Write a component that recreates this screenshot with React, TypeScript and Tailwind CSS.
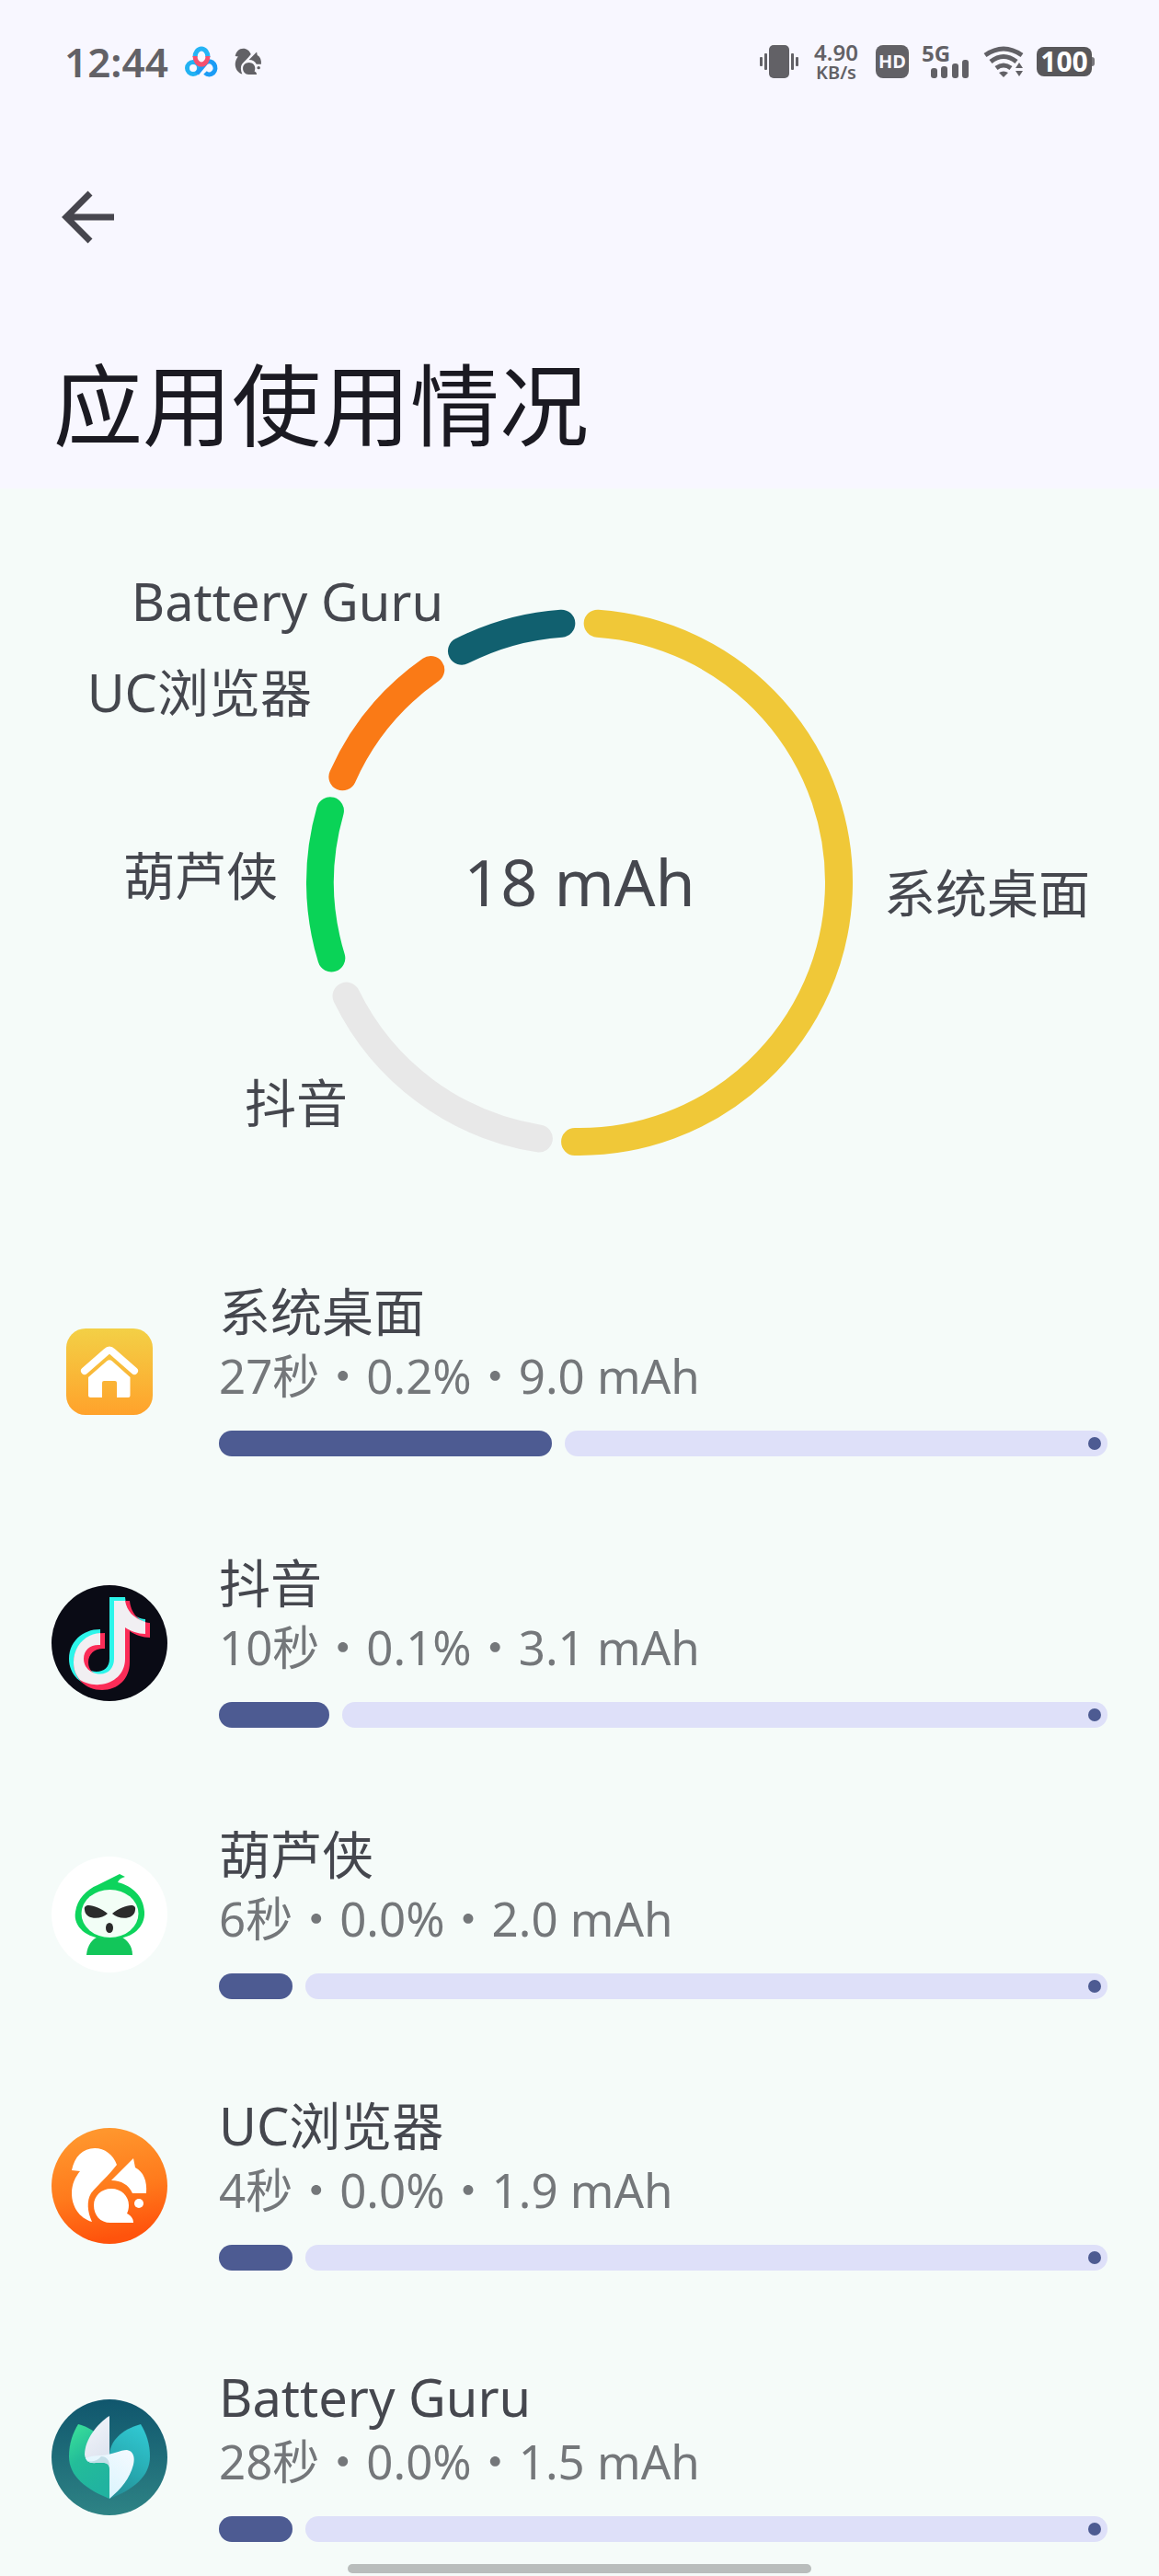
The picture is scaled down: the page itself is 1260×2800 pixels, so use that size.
import React from 'react';

interface AppUsage {
  name: string;
  detail: string;
  percent: number;
  icon: React.ReactNode;
}

interface Segment {
  name: string;
  color: string;
  from: number;
  to: number;
  x: number;
  y: number;
  anchor: 'start' | 'end';
}

const HomeIcon = () => (
  <svg viewBox="0 0 126 126" className="w-full h-full" aria-hidden="true">
    <defs>
      <linearGradient id="home-bg" x1="0" y1="0" x2="0" y2="1">
        <stop offset="0" stopColor="#f3d046" />
        <stop offset="1" stopColor="#ffa22b" />
      </linearGradient>
    </defs>
    <rect x="16" y="16" width="94" height="94" rx="21" fill="url(#home-bg)" />
    <path d="M36 62 L60 41 Q63 38 66 41 L90 62" fill="none" stroke="#fff" strokeWidth="8" strokeLinecap="round" strokeLinejoin="round" />
    <path d="M40 69 L60 51.500 Q63 49 66 51.500 L85.500 69 V89 Q85.500 91 83.500 91 H71 V75 Q71 73 69 73 H57 Q55 73 55 75 V91 H42.500 Q40 91 40 89 Z" fill="#fff" />
  </svg>
);

const NOTE = 'M63 13 H80 C81 25 89 36 102 37 V53 C94 53 86 50 80 46 V80 C80 98 67 110 50 110 C32 110 19 97 19 80 C19 62 33 48 53 48 V65 C43 64 35 70 35 80 C35 88 41 94 49 94 C57 94 63 89 63 80 Z';

const DouyinIcon = () => (
  <svg viewBox="0 0 126 126" className="w-full h-full" aria-hidden="true">
    <circle cx="63" cy="63" r="63" fill="#0a0b15" />
    <path d={NOTE} fill="#2df5ea" />
    <path d={NOTE} fill="#fb2c57" transform="translate(5 4)" />
    <path d="M68 17 H80 C82 28 89 36 102 40 V53 C94 53 86 50 80 46 V80 C80 96 68 107 52 108 C44 109 36 106 31 103 C26 97 24 91 24 84 C24 66 37 53 53 52 V65 C43 64 35 70 35 80 C35 86 38 91 43 94 C57 101 68 93 68 80 Z" fill="#f1eff2" />
  </svg>
);

const HuluxiaIcon = () => (
  <svg viewBox="0 0 126 126" className="w-full h-full" aria-hidden="true">
    <circle cx="63" cy="63" r="63" fill="#fff" />
    <path d="M38 107 C39 96 44 90 51 87 H75 C82 90 88 97 88 107 Z" fill="#12c65a" />
    <path d="M26 60 C28 46 38 36 50 31 L74 19 L80 22 C76 23 73 25 72 28 C88 32 100 43 101 60 C102 77 87 89 70 89 H57 C40 89 23 77 26 60 Z" fill="#0dd45c" />
    <ellipse cx="63.500" cy="62" rx="31" ry="26" fill="#f2fef6" />
    <path d="M36 58 C34 49 50 53 61 62 C54 69 37 69 36 58 Z M91 58 C93 49 77 53 66 62 C73 69 90 69 91 58 Z" fill="#2b2b2b" />
    <ellipse cx="63" cy="77.500" rx="4" ry="5.500" fill="#2b2b2b" />
  </svg>
);

const SquirrelShape = () => (
  <>
    <path d="M22 46 C25 31 34 22 47 22 C58 22 67 29 71 40 C62 52 51 61 43 71 C38 79 39 91 44 102 C30 98 22 85 22 71 C22 61 26 53 31 47 Z" />
    <path d="M65 57 L89 33 L91 43 C100 48 104 57 103 71 H88 C84 62 76 57 65 57 Z" />
    <path d="M65 66 C76 66 84 74 84 84 C84 88 83 91 82 93 C86 95 89 98 89 103 H64 C53 103 46 95 46 84 C46 74 54 66 65 66 Z" />
    <circle cx="95" cy="82" r="5" />
  </>
);

const UcIcon = () => (
  <svg viewBox="0 0 126 126" className="w-full h-full" aria-hidden="true">
    <defs>
      <linearGradient id="uc-bg" x1="0.600" y1="0" x2="0.800" y2="1">
        <stop offset="0" stopColor="#ff962d" />
        <stop offset="0.500" stopColor="#ff7a1c" />
        <stop offset="0.900" stopColor="#ff530c" />
      </linearGradient>
    </defs>
    <circle cx="63" cy="63" r="63" fill="url(#uc-bg)" />
    <g fill="#fff">
      <SquirrelShape />
    </g>
  </svg>
);

const BatteryGuruIcon = () => (
  <svg viewBox="0 0 126 126" className="w-full h-full" aria-hidden="true">
    <defs>
      <linearGradient id="guru-bg" x1="0" y1="0" x2="0" y2="1">
        <stop offset="0" stopColor="#10566d" />
        <stop offset="1" stopColor="#2e8385" />
      </linearGradient>
      <linearGradient id="guru-left" x1="0" y1="0" x2="0.400" y2="1">
        <stop offset="0" stopColor="#3ce39a" />
        <stop offset="0.500" stopColor="#23bd99" />
        <stop offset="1" stopColor="#21b3a0" />
      </linearGradient>
      <linearGradient id="guru-right" x1="0.600" y1="0" x2="0.300" y2="1">
        <stop offset="0" stopColor="#30c6d0" />
        <stop offset="0.600" stopColor="#27a9b0" />
        <stop offset="1" stopColor="#259099" />
      </linearGradient>
      <linearGradient id="guru-top" x1="0" y1="0" x2="0.400" y2="1">
        <stop offset="0" stopColor="#f4f6fc" />
        <stop offset="1" stopColor="#dfe5f0" />
      </linearGradient>
      <linearGradient id="guru-bottom" x1="1" y1="0" x2="0.200" y2="1">
        <stop offset="0" stopColor="#f5faff" />
        <stop offset="1" stopColor="#d5f3fd" />
      </linearGradient>
    </defs>
    <circle cx="63" cy="63" r="63" fill="url(#guru-bg)" />
    <path d="M29 27 C48 32 63 46 63 66 V108 C38 98 19 84 19 62 C19 48 23 37 29 27 Z" fill="url(#guru-left)" />
    <path d="M97 27 C76 33 63 45 63 62 V108 C89 98 107 84 107 62 C107 48 103 37 97 27 Z" fill="url(#guru-right)" />
    <path d="M63 18 C50 26 36 44 36 60 C37 67 42 70 48 69 L63 61 Z" fill="url(#guru-top)" />
    <path d="M37 64 C41 62 47 61 54 61 C66 60 75 55 82 55 C89 56 91 63 89 71 C85 86 76 97 63 108 V76 C63 72 61 69 57 69 H46 C41 69 38 67 37 64 Z" fill="url(#guru-bottom)" />
    <path d="M38 66 C43 69 50 67 54 62 C60 62 63 66 63 73 C61 69 58 69 56 69 H46 C42 69 40 68 38 66 Z" fill="#c3dfe8" />
  </svg>
);

const apps: AppUsage[] = [
  { name: '系统桌面', detail: '27秒・0.2%・9.0 mAh', percent: 37.5, icon: <HomeIcon /> },
  { name: '抖音', detail: '10秒・0.1%・3.1 mAh', percent: 12.4, icon: <DouyinIcon /> },
  { name: '葫芦侠', detail: '6秒・0.0%・2.0 mAh', percent: 8.3, icon: <HuluxiaIcon /> },
  { name: 'UC浏览器', detail: '4秒・0.0%・1.9 mAh', percent: 8.3, icon: <UcIcon /> },
  { name: 'Battery Guru', detail: '28秒・0.0%・1.5 mAh', percent: 8.3, icon: <BatteryGuruIcon /> },
];

const segments: Segment[] = [
  { name: '系统桌面', color: '#f0c838', from: 4, to: 181, x: 961, y: 461, anchor: 'start' },
  { name: '抖音', color: '#e8e8e8', from: 189, to: 244, x: 378, y: 689, anchor: 'end' },
  { name: '葫芦侠', color: '#0ad357', from: 253, to: 286, x: 302, y: 442, anchor: 'end' },
  { name: 'UC浏览器', color: '#fa7a16', from: 294, to: 325, x: 339, y: 243, anchor: 'end' },
  { name: 'Battery Guru', color: '#11606f', from: 333, to: 356, x: 482, y: 144, anchor: 'end' },
];

const CX = 630;
const CY = 428;
const RADIUS = 282;

const arcPath = (from: number, to: number) => {
  const point = (deg: number) => {
    const a = (deg * Math.PI) / 180;
    return `${CX + RADIUS * Math.sin(a)} ${CY - RADIUS * Math.cos(a)}`;
  };
  return `M ${point(from)} A ${RADIUS} ${RADIUS} 0 ${to - from > 180 ? 1 : 0} 1 ${point(to)}`;
};

const StatusBar = () => (
  <div className="h-[134px] px-[70px] flex items-center justify-between text-[#626166]">
    <div className="flex items-center">
      <span className="text-[44px] leading-none font-semibold">12:44</span>
      <svg viewBox="0 0 36 36" className="w-9 h-9 ml-[18px]" fill="none" strokeWidth="5" aria-hidden="true">
        <circle cx="9" cy="25" r="6.500" stroke="#22b2f2" />
        <path d="M22 30 A6.500 7 0 1 0 23 19 L13 31" stroke="#1c9cf5" />
        <path d="M11 13 A7 9 0 0 1 25 13" stroke="#25b4f5" />
        <path d="M11 12 A7 9 0 0 0 25 12" stroke="#f5506e" />
      </svg>
      <svg viewBox="20 20 86 86" className="w-[30px] h-[30px] ml-[18px]" fill="currentColor" aria-hidden="true">
        <SquirrelShape />
      </svg>
    </div>
    <div className="flex items-center">
      <svg viewBox="0 0 42 36" className="w-[42px] h-9" fill="currentColor" aria-hidden="true">
        <rect x="10" y="0" width="22" height="36" rx="5" />
        <rect x="0" y="13" width="3" height="10" rx="1" />
        <rect x="5" y="9" width="3" height="18" rx="1" />
        <rect x="34" y="9" width="3" height="18" rx="1" />
        <rect x="39" y="13" width="3" height="10" rx="1" />
      </svg>
      <div className="ml-3.5 w-[54px] flex flex-col items-center font-semibold">
        <span className="text-[24px] leading-[24px]">4.90</span>
        <span className="text-[20px] leading-[20px]">KB/s</span>
      </div>
      <span className="ml-4 w-9 h-9 rounded-lg bg-[#626166] text-[#f8f7ff] text-[20px] font-bold flex items-center justify-center">HD</span>
      <div className="ml-3.5 w-[52px] h-9 relative">
        <span className="absolute left-0 top-0 text-[24px] leading-[18px] font-bold">5G</span>
        <svg viewBox="0 0 52 36" className="w-[52px] h-9" fill="currentColor" aria-hidden="true">
          <rect x="10" y="25" width="7" height="11" rx="3" />
          <rect x="21" y="23" width="7" height="13" rx="3" />
          <rect x="33" y="20" width="7" height="16" rx="3" />
          <rect x="44" y="16" width="7" height="20" rx="3" />
        </svg>
      </div>
      <svg viewBox="0 0 44 36" className="w-11 h-9 ml-[15px]" fill="none" stroke="currentColor" strokeWidth="5" aria-hidden="true">
        <path d="M2 11 Q22 -3 42 11" />
        <path d="M8 18 Q22 7 36 18" />
        <path d="M14 25 Q22 19 30 25" />
        <path d="M17 30 Q22 27 27 30 L22 35 Z" fill="currentColor" stroke="none" />
        <path d="M35 25 L39 19 L43 25 Z M35 28 L39 34 L43 28 Z" fill="currentColor" stroke="none" />
      </svg>
      <span className="ml-3.5 w-[60px] h-8 rounded-lg bg-[#58575a] text-white text-[30px] leading-none font-bold flex items-center justify-center">100</span>
      <span className="w-[3px] h-2.5 rounded-r bg-[#77767b]" />
    </div>
  </div>
);

const UsageChart = () => (
  <svg viewBox="0 0 1260 868" className="block w-full h-auto" role="img" aria-label="18 mAh">
    {segments.map((s) => (
      <path key={s.name} d={arcPath(s.from, s.to)} fill="none" stroke={s.color} strokeWidth="30" strokeLinecap="round" />
    ))}
    {segments.map((s) => (
      <text key={s.name} x={s.x} y={s.y} textAnchor={s.anchor} className="text-[56px] fill-[#45474e]">
        {s.name}
      </text>
    ))}
    <text x={CX} y="454" textAnchor="middle" className="text-[70px] fill-[#45474e]">
      18 mAh
    </text>
  </svg>
);

const UsageRow: React.FC<{ app: AppUsage }> = ({ app }) => (
  <li className="flex items-center gap-14">
    <div className="w-[126px] h-[126px] shrink-0">{app.icon}</div>
    <div className="flex-1 min-w-0">
      <h2 className="text-[56px] leading-[52px] text-[#45474e]">{app.name}</h2>
      <p className="mt-1 text-[51px] leading-[80px] text-[#74777a]">{app.detail}</p>
      <div
        className="mt-5 flex gap-3.5"
        role="progressbar"
        aria-label={app.name}
        aria-valuenow={app.percent}
        aria-valuemin={0}
        aria-valuemax={100}
      >
        <div className="h-7 rounded-full bg-[#4d5b92]" style={{ width: `${app.percent}%` }} />
        <div className="h-7 flex-1 rounded-full bg-[#dee0f9] flex items-center justify-end pr-[7px]">
          <span className="w-3.5 h-3.5 rounded-full bg-[#4d5b92]" />
        </div>
      </div>
    </div>
  </li>
);

export default function App() {
  return (
    <div className="min-h-screen bg-[#f5fbf9] font-['Noto_Sans','Noto_Sans_CJK_SC',sans-serif]">
      <header className="bg-[#f8f7ff]">
        <StatusBar />
        <div className="pt-[60px] pl-[54px]">
          <button type="button" aria-label="返回" className="block p-2">
            <svg viewBox="0 0 68 68" className="w-[68px] h-[68px]" fill="none" stroke="#47464e" strokeWidth="7" aria-hidden="true">
              <path d="M62 34 H10 M36 8 L10 34 L36 60" />
            </svg>
          </button>
        </div>
        <h1 className="pt-[101px] pb-8 px-[58px] text-[97px] leading-[120px] text-[#1b1a22]">应用使用情况</h1>
      </header>
      <main>
        <UsageChart />
        <ul className="px-14 flex flex-col gap-[111px]">
          {apps.map((app) => (
            <UsageRow key={app.name} app={app} />
          ))}
        </ul>
      </main>
      <div className="w-2/5 h-2.5 mt-6 mx-auto rounded-full bg-[#b9bdbc]" />
    </div>
  );
}
